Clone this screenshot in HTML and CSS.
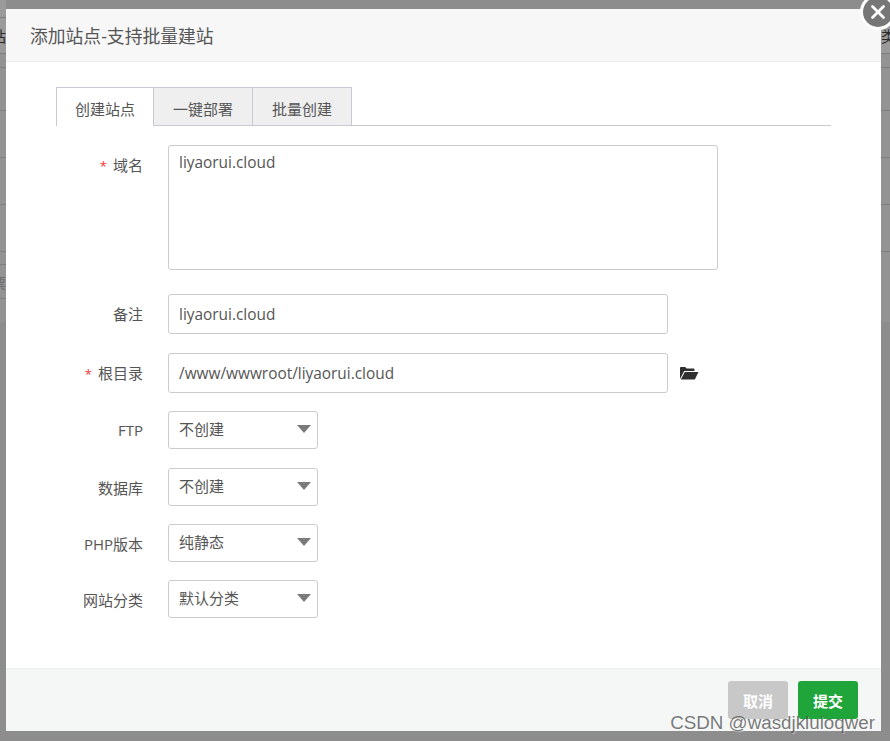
FILE: index.html
```html
<!DOCTYPE html>
<html lang="zh">
<head>
  <meta charset="UTF-8">
  <title>添加站点</title>
  <link rel="stylesheet" href="styles.css">
</head>
<body>
<div class="backdrop">
  <div class="bg-col bg-left">
    <div class="bg-row h-top"></div>
    <div class="bg-row h-head"><span class="bg-text">站</span></div>
    <div class="bg-row h-14"></div>
    <div class="bg-row h-43"></div>
    <div class="bg-row h-47"></div>
    <div class="bg-row h-47"></div>
    <div class="bg-row h-47"></div>
    <div class="bg-row h-13"></div>
    <div class="bg-row h-34"><span class="bg-text faint">票</span></div>
    <div class="bg-end h-23"></div>
  </div>
  <div class="dialog">
    <div class="dialog-title">添加站点-支持批量建站</div>
    <div class="dialog-body">
      <div class="tabs">
        <div class="tab active">创建站点</div>
        <div class="tab">一键部署</div>
        <div class="tab">批量创建</div>
      </div>
      <form class="site-form">
        <div class="row row-domain">
          <label class="req">域名</label>
          <textarea class="field area">liyaorui.cloud</textarea>
        </div>
        <div class="row row-note">
          <label>备注</label>
          <input class="field text" value="liyaorui.cloud">
        </div>
        <div class="row row-path">
          <label class="req">根目录</label>
          <input class="field text" value="/www/wwwroot/liyaorui.cloud">
          <svg class="folder" viewBox="0 0 20 16" width="20" height="16">
            <path d="M1 14V3.200C1 2.500 1.500 2 2.200 2H6.300L7.600 3.500H14.300C15 3.500 15.500 4 15.500 4.700V6H5.200L1 14Z"/>
            <path d="M5.800 7H19.500L15.800 14.500H1.800Z"/>
          </svg>
        </div>
        <div class="row row-select row-ftp"><label>FTP</label><div class="field select">不创建</div></div>
        <div class="row row-select row-db"><label>数据库</label><div class="field select">不创建</div></div>
        <div class="row row-select"><label>PHP版本</label><div class="field select">纯静态</div></div>
        <div class="row row-select"><label>网站分类</label><div class="field select">默认分类</div></div>
      </form>
    </div>
    <div class="dialog-foot">
      <button type="button" class="btn cancel">取消</button>
      <button type="button" class="btn submit">提交</button>
    </div>
    <div class="close">
      <svg viewBox="0 0 16 16" width="16" height="16"><path d="M2.500 2.500L13.500 13.500M13.500 2.500L2.500 13.500"/></svg>
    </div>
  </div>
  <div class="bg-col bg-right">
    <div class="bg-row h-top no-line"></div>
    <div class="bg-row h-head"><span class="bg-text">类</span></div>
    <div class="bg-row h-14"></div>
    <div class="bg-row h-43"></div>
    <div class="bg-row h-47"></div>
    <div class="bg-row h-47"></div>
    <div class="bg-row h-47"></div>
    <div class="bg-end h-70"></div>
  </div>
  <div class="watermark">CSDN @wasdjkluioqwer</div>
</div>
</body>
</html>
```

FILE: styles.css
```css
* { box-sizing: border-box; }
html, body { margin: 0; padding: 0; height: 100%; }
body { font-family: "Open Sans", "Noto Sans CJK SC", sans-serif; color: #555; overflow: hidden; }
.backdrop { position: relative; display: flex; align-items: flex-start; width: 890px; height: 741px; overflow: hidden; background: #8d8d8d; }

/* page behind the dialog, dimmed */
.bg-col { flex: none; width: 6px; overflow: hidden; font-size: 15px; color: #2a2a2a; }
.bg-right { width: 9px; }
.bg-left { direction: rtl; }
.bg-row { background: #939393; border-bottom: 1px solid #7d7d7d; }
.bg-text { display: block; width: 15px; line-height: 36px; white-space: nowrap; }
.bg-left .bg-text { width: 6px; }
.faint { color: #6d6d6d; }
.no-line { border-bottom: 0; }
.h-top { height: 18px; background: #9b9b9b; }
.h-head { height: 36px; background: #9a9a9a; }
.h-14 { height: 14px; }
.h-43 { height: 43px; }
.h-47 { height: 47px; }
.h-13 { height: 13px; }
.h-34 { height: 34px; }
.h-23 { height: 23px; background: #939393; }
.h-70 { height: 70px; background: #939393; }

.dialog { position: relative; display: flex; flex-direction: column; flex: none; width: 875px; height: 722px; margin-top: 9px; background: #fff; }
.dialog-title { height: 53px; padding-left: 24px; background: #f7f7f7; border-bottom: 1px solid #eee; font-size: 17.800px; line-height: 54px; color: #555; }
.dialog-body { flex: 1; padding: 25px 50px 0; }
.dialog-foot { display: flex; justify-content: flex-end; gap: 10px; height: 63px; padding: 12px 23px 0 0; background: #f5f7f7; border-top: 1px solid #eef0f0; }

.tabs { display: flex; height: 39px; border-bottom: 1px solid #c9c9d6; }
.tab { width: 99px; height: 39px; border: 1px solid #c9c9d6; border-left: 0; background: #efefef; font-size: 15px; line-height: 42px; text-align: center; color: #555; }
.tab.active { width: 98px; border-left: 1px solid #c9c9d6; border-bottom: 0; background: #fff; }

.site-form { display: flex; flex-direction: column; }
.row { display: flex; align-items: flex-start; }
.row label { width: 87px; flex: none; margin-right: 25px; text-align: right; font-size: 15px; color: #555; }
.req::before { content: "*"; margin-right: 6px; font-size: 13px; color: #f33; }
.field { flex: none; border: 1px solid #ccc; border-radius: 3px; background: #fff; font-family: inherit; color: #555; outline: none; }
.area { display: block; width: 550px; height: 125px; padding: 6px 10px; font-size: 15.400px; line-height: 22px; resize: none; overflow: hidden; }
.text { width: 500px; height: 40px; padding: 0 10px; font-size: 15.400px; }
.select { position: relative; width: 150px; height: 38px; padding-left: 10px; font-size: 15px; line-height: 35px; }
.select::after { content: ""; position: absolute; top: 13px; right: 6px; border-style: solid; border-width: 8px 7px 0; border-color: #7b7b7b transparent transparent; }

.row-domain { margin-top: 19px; }
.row-domain label { line-height: 40px; }
.row-note { margin-top: 24px; height: 40px; }
.row-note label { line-height: 40px; }
.row-path { margin-top: 19px; height: 40px; align-items: center; }
.row-path label { line-height: 40px; }
.row-select { height: 38px; margin-top: 18px; }
.row-select label { line-height: 40px; }
.row-ftp label { line-height: 38px; }
.row-db { margin-top: 19px; }
.folder { margin-left: 11px; fill: #2f2f2f; }

.btn { width: 60px; height: 38px; border: 0; border-radius: 3px; color: #fff; font-family: inherit; font-size: 15px; font-weight: 700; }
.cancel { background: #c8c8c8; }
.submit { background: #20a53a; }

.close { position: absolute; top: -15px; right: -15px; display: flex; align-items: center; justify-content: center; width: 36px; height: 36px; border-radius: 50%; background: #777; border: 3px solid #fff; }
.close svg { fill: none; stroke: #fff; stroke-width: 2.800; stroke-linecap: round; }

.watermark { position: absolute; right: 15px; top: 712px; font-family: "Liberation Sans", sans-serif; font-size: 18.800px; line-height: 21px; color: rgba(70, 70, 70, 0.72); text-shadow: 1px 1px 1px rgba(255, 255, 255, 0.4); }
```
